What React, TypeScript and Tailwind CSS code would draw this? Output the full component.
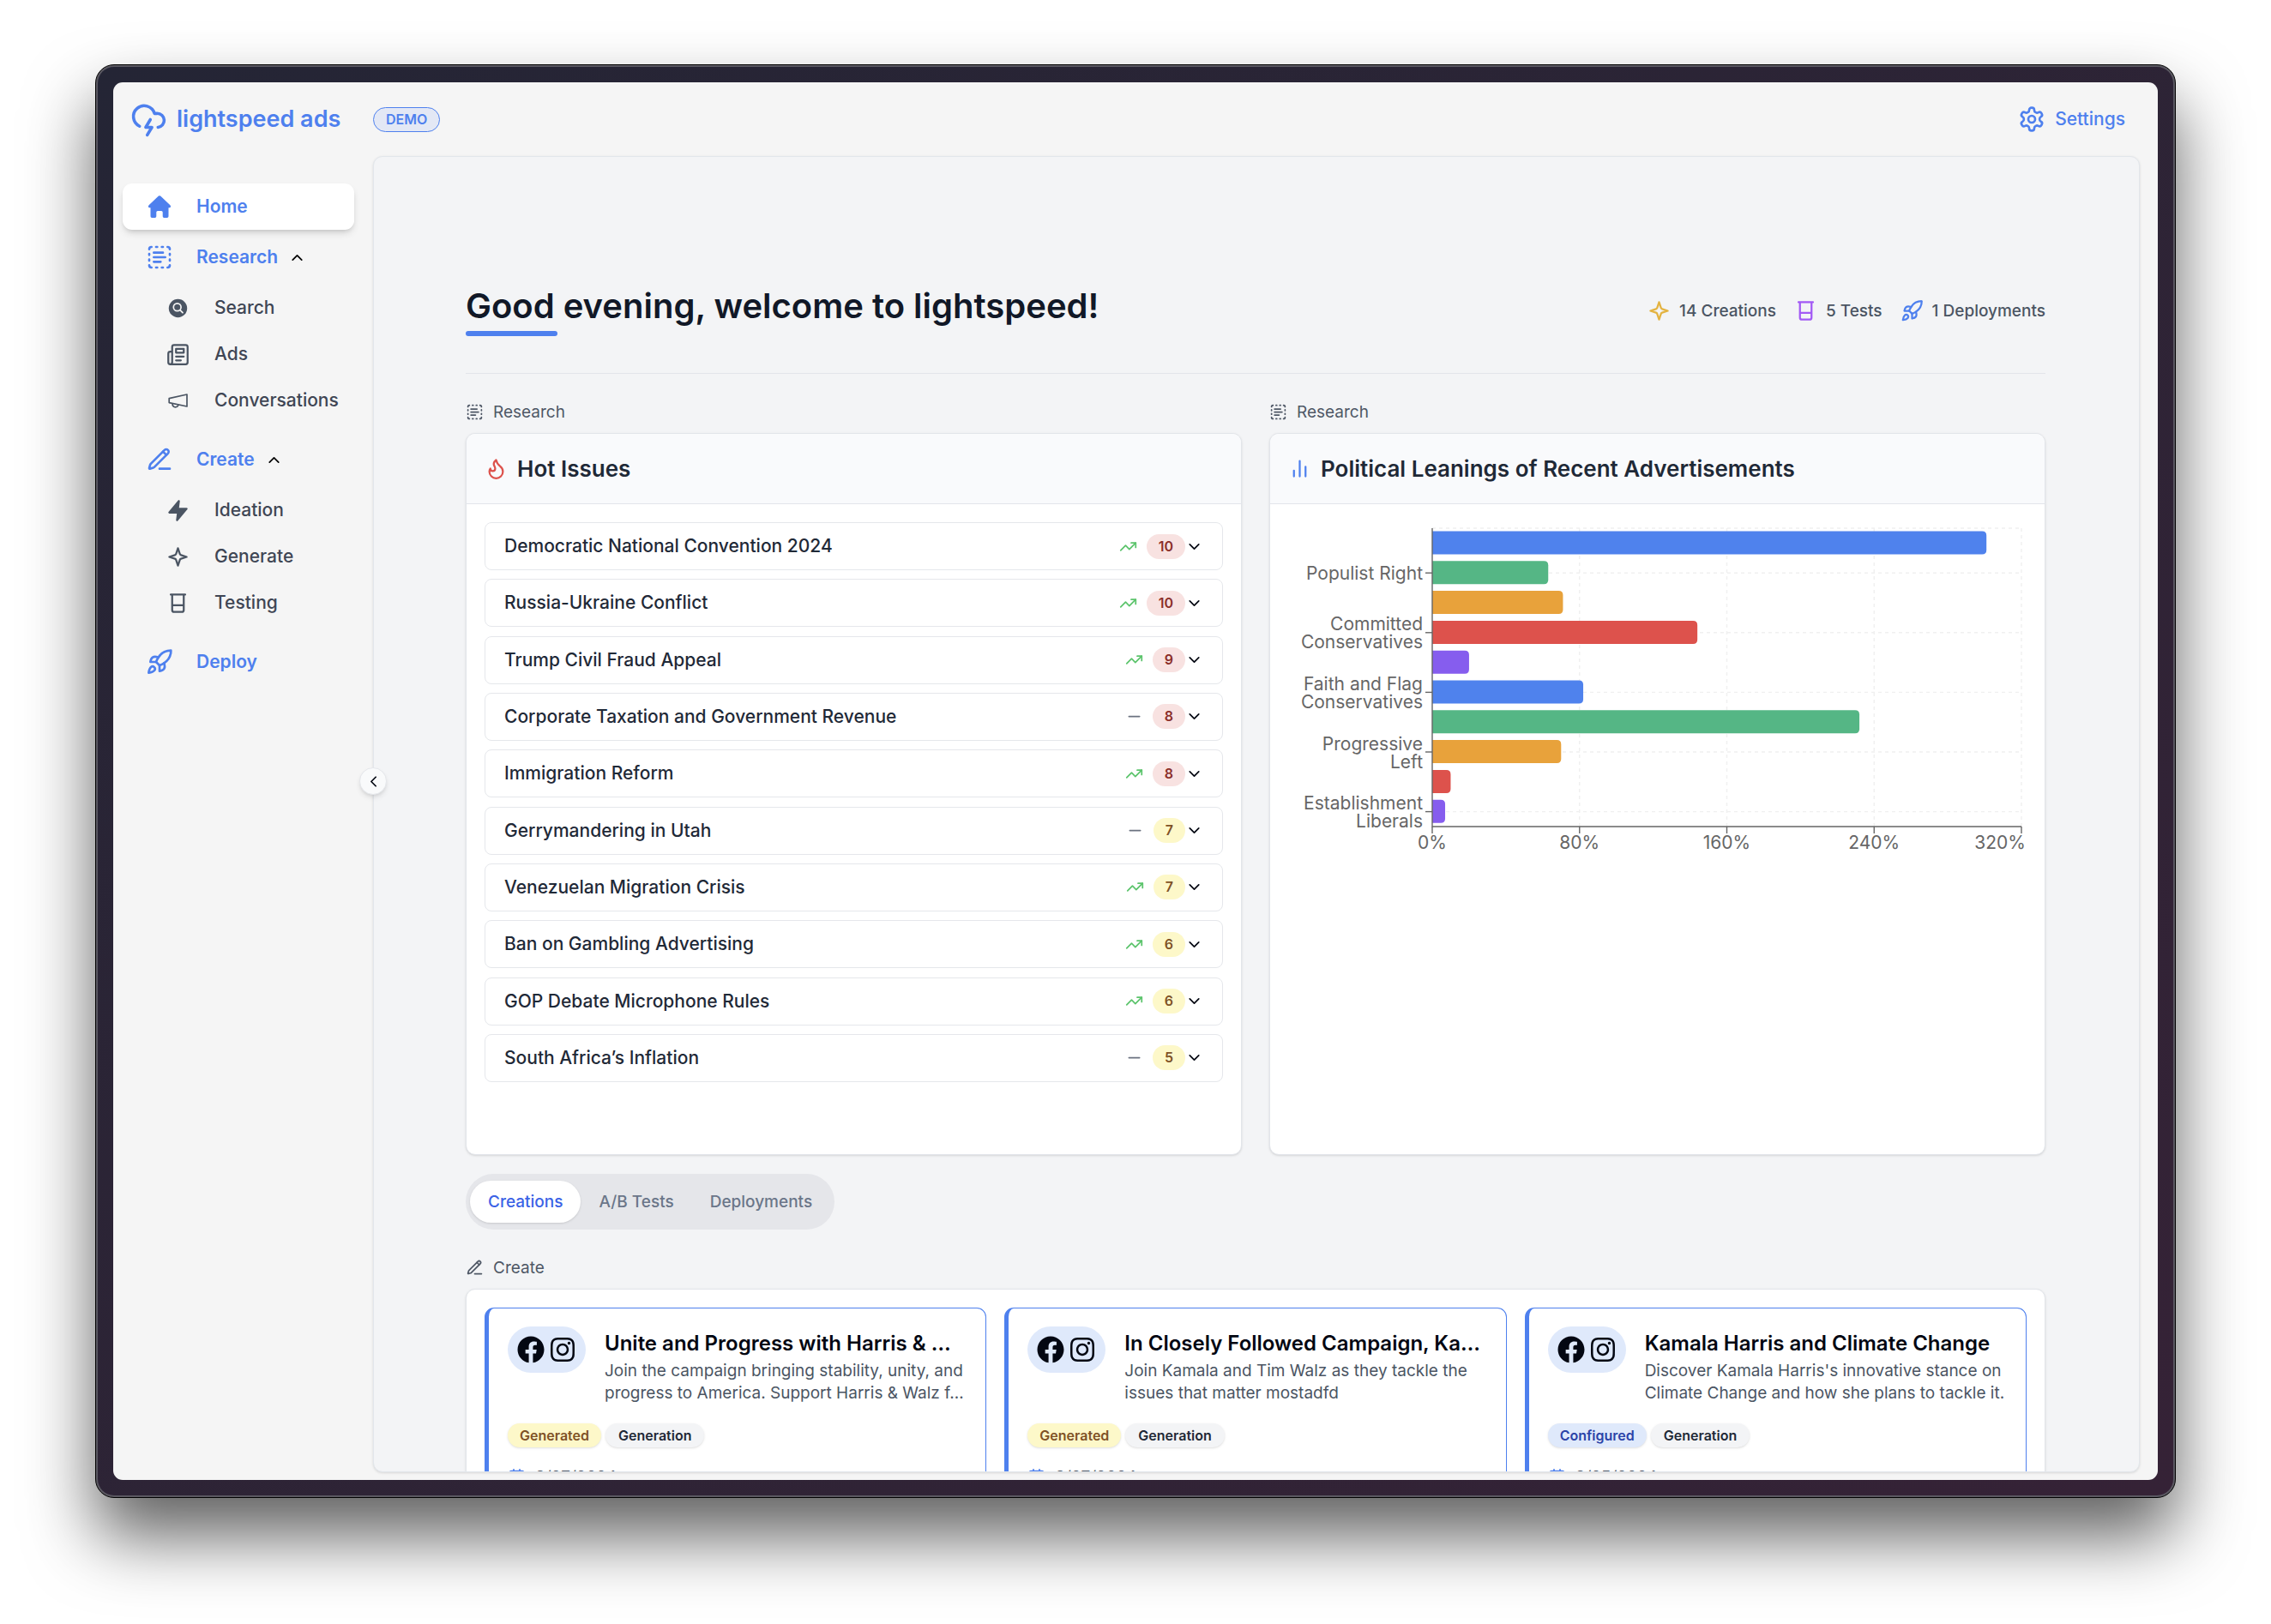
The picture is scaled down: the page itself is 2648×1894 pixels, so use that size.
import type { ReactNode } from "react";
import { FaFacebook, FaInstagram } from "react-icons/fa";

type IconProps = { className?: string; fill?: string };

function Stroke({ className = "size-[27px]", fill = "none", children }: IconProps & { children: ReactNode }) {
  return (
    <svg
      viewBox="0 0 24 24"
      className={`shrink-0 ${className}`}
      fill={fill}
      stroke="currentColor"
      strokeWidth={2}
      strokeLinecap="round"
      strokeLinejoin="round"
      aria-hidden="true"
    >
      {children}
    </svg>
  );
}

const CloudLightningIcon = (p: IconProps) => (
  <Stroke {...p}>
    <path d="M6 16.326A7 7 0 1 1 15.71 8h1.79a4.5 4.5 0 0 1 .5 8.973" />
    <path d="m13 12-3 5h4l-3 5" />
  </Stroke>
);

const TextSelectIcon = (p: IconProps) => (
  <Stroke {...p}>
    <path d="M5 3a2 2 0 0 0-2 2M19 3a2 2 0 0 1 2 2M21 19a2 2 0 0 1-2 2M5 21a2 2 0 0 1-2-2M9 3h1M9 21h1M14 3h1M14 21h1M3 9v1M21 9v1M3 14v1M21 14v1" />
    <path d="M7 8h8M7 12h10M7 16h6" />
  </Stroke>
);

const HomeIcon = () => (
  <svg viewBox="0 0 32 32" className="size-8 shrink-0" fill="currentColor" aria-hidden="true">
    <path d="M14.9 3.6a1.7 1.7 0 0 1 2.2 0L28.4 14.2c1.2 1.1.7 3-.8 3h-1.1v10a1.7 1.7 0 0 1-1.7 1.7h-3.4a1.7 1.7 0 0 1-1.7-1.7v-4.6a1.6 1.6 0 0 0-1.6-1.6h-4.2a1.6 1.6 0 0 0-1.6 1.6v4.6a1.7 1.7 0 0 1-1.7 1.7H7.2a1.7 1.7 0 0 1-1.7-1.7v-10H4.4c-1.5 0-2-1.9-.8-3z" />
  </svg>
);

const SearchCircleIcon = () => (
  <svg viewBox="0 0 27 27" className="size-[27px] shrink-0" aria-hidden="true">
    <circle cx="13.5" cy="13.5" r="10.7" fill="currentColor" />
    <circle cx="12.7" cy="12.3" r="4.4" fill="none" stroke="#f5f5f5" strokeWidth="1.7" />
    <path d="m16 15.7 3 3" stroke="#f5f5f5" strokeWidth="1.8" strokeLinecap="round" />
  </svg>
);

const NewspaperIcon = (p: IconProps) => (
  <Stroke {...p}>
    <path d="M4 22h16a2 2 0 0 0 2-2V4a2 2 0 0 0-2-2H8a2 2 0 0 0-2 2v16a2 2 0 0 1-2 2Zm0 0a2 2 0 0 1-2-2v-9c0-1.1.9-2 2-2h2" />
    <path d="M18 14h-8M15 18h-5M10 6h8v4h-8V6Z" />
  </Stroke>
);

const MegaphoneIcon = () => (
  <svg viewBox="0 0 27 27" className="size-[27px] shrink-0" fill="none" stroke="currentColor" strokeWidth={1.7} strokeLinejoin="round" aria-hidden="true">
    <path d="M3.2 10.7 24 6v14L3.200 15.600z" />
    <path d="M7 16.500c0 2.400 1.300 4.300 3.600 4.300 1.900 0 3-1 3.500-2.900" />
  </svg>
);

const PencilLineIcon = (p: IconProps) => (
  <Stroke {...p}>
    <path d="M12 20h9" />
    <path d="M16.376 3.622a1 1 0 0 1 3.002 3.002L7.368 18.635a2 2 0 0 1-.855.506l-2.872.838a.5.5 0 0 1-.62-.62l.838-2.872a2 2 0 0 1 .506-.854z" />
    <path d="m15 5 3 3" />
  </Stroke>
);

const ZapIcon = (p: IconProps) => (
  <Stroke {...p} fill="currentColor">
    <path d="M13 2 3 14h9l-1 8 10-12h-9l1-8z" />
  </Stroke>
);

const SparkleIcon = (p: IconProps) => (
  <Stroke {...p}>
    <path d="m12 3-1.912 5.813a2 2 0 0 1-1.275 1.275L3 12l5.813 1.912a2 2 0 0 1 1.275 1.275L12 21l1.912-5.813a2 2 0 0 1 1.275-1.275L21 12l-5.813-1.912a2 2 0 0 1-1.275-1.275L12 3Z" />
  </Stroke>
);

const BeakerIcon = (p: IconProps) => (
  <Stroke {...p}>
    <path d="M4.5 3h15M6 3v16a2 2 0 0 0 2 2h8a2 2 0 0 0 2-2V3M6 14h12" />
  </Stroke>
);

const RocketIcon = (p: IconProps) => (
  <Stroke {...p}>
    <path d="M4.5 16.5c-1.5 1.26-2 5-2 5s3.74-.5 5-2c.71-.84.7-2.13-.09-2.91a2.18 2.18 0 0 0-2.91-.09z" />
    <path d="m12 15-3-3a22 22 0 0 1 2-3.95A12.88 12.88 0 0 1 22 2c0 2.72-.78 7.5-6 11a22.35 22.35 0 0 1-4 2z" />
    <path d="M9 12H4s.55-3.03 2-4c1.62-1.08 5 0 5 0M12 15v5s3.03-.55 4-2c1.08-1.62 0-5 0-5" />
  </Stroke>
);

const SettingsIcon = (p: IconProps) => (
  <Stroke {...p}>
    <path d="M12.22 2h-.44a2 2 0 0 0-2 2v.18a2 2 0 0 1-1 1.73l-.43.25a2 2 0 0 1-2 0l-.15-.08a2 2 0 0 0-2.73.73l-.22.38a2 2 0 0 0 .73 2.73l.15.1a2 2 0 0 1 1 1.72v.51a2 2 0 0 1-1 1.74l-.15.09a2 2 0 0 0-.73 2.73l.22.38a2 2 0 0 0 2.73.73l.15-.08a2 2 0 0 1 2 0l.43.25a2 2 0 0 1 1 1.73V20a2 2 0 0 0 2 2h.44a2 2 0 0 0 2-2v-.18a2 2 0 0 1 1-1.73l.43-.25a2 2 0 0 1 2 0l.15.08a2 2 0 0 0 2.73-.73l.22-.39a2 2 0 0 0-.73-2.73l-.15-.08a2 2 0 0 1-1-1.74v-.5a2 2 0 0 1 1-1.74l.15-.09a2 2 0 0 0 .73-2.73l-.22-.38a2 2 0 0 0-2.73-.73l-.15.08a2 2 0 0 1-2 0l-.43-.25a2 2 0 0 1-1-1.73V4a2 2 0 0 0-2-2z" />
    <circle cx="12" cy="12" r="3" />
  </Stroke>
);

const FlameIcon = (p: IconProps) => (
  <Stroke {...p}>
    <path d="M8.5 14.5A2.5 2.5 0 0 0 11 12c0-1.38-.5-2-1-3-1.072-2.143-.224-4.054 2-6 .5 2.5 2 4.9 4 6.5 2 1.6 3 3.5 3 5.5a7 7 0 1 1-14 0c0-1.153.433-2.294 1-3a2.5 2.5 0 0 0 2.5 2.5z" />
  </Stroke>
);

const BarsIcon = (p: IconProps) => (
  <Stroke {...p}>
    <path d="M18 20V10M12 20V4M6 20v-6" />
  </Stroke>
);

const TrendingUpIcon = (p: IconProps) => (
  <Stroke {...p}>
    <path d="m22 7-8.5 8.5-5-5L2 17" />
    <path d="M16 7h6v6" />
  </Stroke>
);

const MinusIcon = (p: IconProps) => (
  <Stroke {...p}>
    <path d="M5 12h14" />
  </Stroke>
);

const CalendarIcon = (p: IconProps) => (
  <Stroke {...p}>
    <path d="M8 2v4M16 2v4M3 10h18" />
    <rect x="3" y="4" width="18" height="18" rx="2" />
  </Stroke>
);

const ChevronIcon = ({ className, d }: { className?: string; d: string }) => (
  <Stroke className={className}>
    <path d={d} />
  </Stroke>
);

const UP = "m18 15-6-6-6 6";
const DOWN = "m6 9 6 6 6-6";
const LEFT = "m15 18-6-6 6-6";

function SubLink({ icon, label }: { icon: ReactNode; label: string }) {
  return (
    <li>
      <a href="#" className="flex h-[54px] items-center gap-[29px] pl-[51px] text-[21px] leading-[32px] font-medium text-[#3f4654]">
        <span className="text-[#4b5563]">{icon}</span>
        {label}
      </a>
    </li>
  );
}

function GroupButton({ icon, label }: { icon: ReactNode; label: string }) {
  return (
    <button type="button" aria-expanded="true" className="flex h-[54px] w-full items-center pl-[27px] text-[21px] leading-[32px] font-semibold text-[#4e80ee]">
      {icon}
      <span className="ml-[27px]">{label}</span>
      <ChevronIcon d={UP} className="ml-3 size-[21px] text-black" />
    </button>
  );
}

function Sidebar() {
  return (
    <nav aria-label="Main" className="w-[303px] shrink-0 pt-8 pr-[22px] pl-[11px]">
      <a href="#" aria-current="page" className="flex h-[54px] items-center gap-[27px] rounded-[11px] bg-white pl-[27px] text-[21px] leading-[32px] font-semibold text-[#4e80ee] shadow-[0_5px_8px_-1px_rgba(0,0,0,0.12),0_3px_5px_-2px_rgba(0,0,0,0.12)]">
        <HomeIcon />
        Home
      </a>
      <div className="mt-[5px]">
        <GroupButton icon={<TextSelectIcon className="size-8" />} label="Research" />
        <ul className="mt-[5px]">
          <SubLink icon={<SearchCircleIcon />} label="Search" />
          <SubLink icon={<NewspaperIcon />} label="Ads" />
          <SubLink icon={<MegaphoneIcon />} label="Conversations" />
        </ul>
      </div>
      <div className="mt-[15px]">
        <GroupButton icon={<PencilLineIcon className="size-8" />} label="Create" />
        <ul className="mt-[5px]">
          <SubLink icon={<ZapIcon />} label="Ideation" />
          <SubLink icon={<SparkleIcon />} label="Generate" />
          <SubLink icon={<BeakerIcon />} label="Testing" />
        </ul>
      </div>
      <a href="#" className="mt-[15px] flex h-[54px] items-center gap-[27px] pl-[27px] text-[21px] leading-[32px] font-semibold text-[#4e80ee]">
        <RocketIcon className="size-8" />
        Deploy
      </a>
    </nav>
  );
}

function SectionLabel({ icon, children }: { icon: ReactNode; children: ReactNode }) {
  return (
    <div className="mb-[11px] flex items-center gap-[11px] text-[19px] leading-[27px] text-[#4f5866]">
      {icon}
      {children}
    </div>
  );
}

function Card({ icon, title, children }: { icon: ReactNode; title: string; children: ReactNode }) {
  return (
    <section className="flex-1 overflow-hidden rounded-[11px] border border-[#e2e5ea] bg-white shadow-sm">
      <header className="flex h-[82px] items-center gap-[11px] border-b border-[#e2e5ea] bg-[#f9fafc] px-[21px]">
        {icon}
        <h2 className="text-[26px] leading-[38px] font-semibold text-[#1f2937]">{title}</h2>
      </header>
      {children}
    </section>
  );
}

const issues = [
  { title: "Democratic National Convention 2024", score: 10, up: true },
  { title: "Russia-Ukraine Conflict", score: 10, up: true },
  { title: "Trump Civil Fraud Appeal", score: 9, up: true },
  { title: "Corporate Taxation and Government Revenue", score: 8, up: false },
  { title: "Immigration Reform", score: 8, up: true },
  { title: "Gerrymandering in Utah", score: 7, up: false },
  { title: "Venezuelan Migration Crisis", score: 7, up: true },
  { title: "Ban on Gambling Advertising", score: 6, up: true },
  { title: "GOP Debate Microphone Rules", score: 6, up: true },
  { title: "South Africa’s Inflation", score: 5, up: false },
];

function HotIssues() {
  return (
    <ul className="mx-[21px] mt-[21px] mb-[84px] flex h-[653px] flex-col justify-between">
      {issues.map((issue) => (
        <li key={issue.title}>
          <button type="button" aria-expanded="false" className="flex h-14 w-full items-center rounded-lg border border-[#e5e7eb] px-[22px] text-left">
            <span className="flex-1 text-[21px] leading-[32px] font-medium text-[#1f2937]">{issue.title}</span>
            {issue.up ? <TrendingUpIcon className="size-[21px] text-[#5cc46c]" /> : <MinusIcon className="size-[21px] text-[#6b7280]" />}
            <span
              className={`ml-[11px] rounded-full px-[14px] text-[16px] leading-[29px] font-semibold ${
                issue.score > 7 ? "bg-[#f8e2e1] text-[#8b2f2a]" : "bg-[#fdf8c9] text-[#7f5226]"
              }`}
            >
              {issue.score}
            </span>
            <ChevronIcon d={DOWN} className="size-[21px] text-[#030712]" />
          </button>
        </li>
      ))}
    </ul>
  );
}

const bars = [
  { value: 301, color: "#4f82ed" },
  { value: 63, color: "#55b685", label: ["Populist Right"] },
  { value: 71, color: "#e8a23b" },
  { value: 144, color: "#dd524c", label: ["Committed", "Conservatives"] },
  { value: 20, color: "#865dee" },
  { value: 82, color: "#4f82ed", label: ["Faith and Flag", "Conservatives"] },
  { value: 232, color: "#55b685" },
  { value: 70, color: "#e8a23b", label: ["Progressive", "Left"] },
  { value: 10, color: "#dd524c" },
  { value: 7, color: "#865dee", label: ["Establishment", "Liberals"] },
];

function LeaningsChart() {
  const x0 = 168;
  const width = 687;
  const top = 7;
  const band = 34.8;
  const bottom = top + band * bars.length;
  return (
    <svg
      viewBox="0 0 861 400"
      role="img"
      aria-label="Political leanings of recent advertisements"
      className="mx-[21px] mt-[21px] w-[calc(100%-42px)] text-[21px]"
      fill="#666666"
    >
      <g stroke="#f0f0f0" strokeWidth="1.4" strokeDasharray="4 4">
        <path d={`M${x0} ${top}h${width}`} />
        {bars.map((bar, i) => bar.label && <path key={i} d={`M${x0} ${top + band * (i + 0.5)}h${width}`} />)}
        {[1, 2, 3, 4].map((n) => (
          <path key={n} d={`M${x0 + (width * n) / 4} ${top}V${bottom}`} />
        ))}
      </g>
      {bars.map((bar, i) => {
        const w = (bar.value / 320) * width;
        return <path key={i} fill={bar.color} d={`M${x0} ${top + band * i + 3.5}h${w - 5}q5 0 5 5v17q0 5 -5 5h${5 - w}z`} />;
      })}
      <g stroke="#666666" strokeWidth="1.4" fill="none">
        <path d={`M${x0} ${top}V${bottom}H${x0 + width}`} />
        {[0, 1, 2, 3, 4].map((n) => (
          <path key={n} d={`M${x0 + (width * n) / 4} ${bottom}v8`} />
        ))}
        {bars.map((bar, i) => bar.label && <path key={i} d={`M${x0} ${top + band * (i + 0.5)}h-8`} />)}
      </g>
      {bars.map((bar, i) =>
        bar.label?.map((line, n, all) => (
          <text key={line + i} x={x0 - 11} y={top + band * (i + 0.5) + 8 + (n - (all.length - 1) / 2) * 21} textAnchor="end">
            {line}
          </text>
        )),
      )}
      {[0, 1, 2, 3].map((n) => (
        <text key={n} x={x0 + (width * n) / 4} y={bottom + 26} textAnchor="middle">
          {n * 80}%
        </text>
      ))}
      <text x="860" y={bottom + 26} textAnchor="end">
        320%
      </text>
    </svg>
  );
}

const creations = [
  {
    title: "Unite and Progress with Harris & …",
    text: "Join the campaign bringing stability, unity, and progress to America. Support Harris & Walz f…",
    status: "Generated",
    date: "8/27/2024",
  },
  {
    title: "In Closely Followed Campaign, Ka…",
    text: "Join Kamala and Tim Walz as they tackle the issues that matter mostadfd",
    status: "Generated",
    date: "8/27/2024",
  },
  {
    title: "Kamala Harris and Climate Change",
    text: "Discover Kamala Harris's innovative stance on Climate Change and how she plans to tackle it.",
    status: "Configured",
    date: "8/25/2024",
  },
];

function CreationCard({ title, text, status, date }: (typeof creations)[number]) {
  return (
    <article className="rounded-[11px] border border-l-[5px] border-[#4e80ee] bg-white p-[21px] pl-[22px]">
      <div className="flex items-start gap-[22px]">
        <div className="flex shrink-0 gap-[5px] rounded-full bg-[#dfe9fb] p-[11px] text-[#030712]">
          <FaFacebook className="size-8" aria-label="Facebook" />
          <FaInstagram className="size-8" aria-label="Instagram" />
        </div>
        <div className="min-w-0 flex-1">
          <h3 className="truncate text-[24px] leading-[39px] font-semibold text-[#030712]">{title}</h3>
          <p className="line-clamp-2 text-[19px] leading-[26px] text-[#4b5563]">{text}</p>
        </div>
      </div>
      <div className="mt-[22px] flex gap-[5px] text-[16px] leading-[28px] font-semibold">
        <span className={`rounded-full px-[14px] shadow-sm ${status === "Generated" ? "bg-[#fdf8c9] text-[#7f5226]" : "bg-[#dfe9fb] text-[#2b43a8]"}`}>{status}</span>
        <span className="rounded-full bg-[#f3f4f6] px-[15px] text-[#1f2937] shadow-sm">Generation</span>
      </div>
      <div className="mt-[21px] flex items-center gap-[11px] text-[19px] leading-[27px] text-[#4b5563]">
        <CalendarIcon className="size-[21px] text-[#4e80ee]" />
        {date}
      </div>
    </article>
  );
}

function Dashboard() {
  return (
    <main className="mr-[21px] mb-[9px] min-w-0 flex-1 overflow-hidden rounded-[11px] border border-[#e2e6eb] bg-[#f3f4f6] pt-[150px] pr-[109px] pl-[107px] shadow-[0_1px_3px_rgba(0,0,0,0.12)]">
      <div className="flex items-center justify-between border-b border-[#e2e5ea] pb-[43px]">
        <div>
          <h1 className="text-[40px] leading-[48px] font-semibold text-[#111827]">Good evening, welcome to lightspeed!</h1>
          <div className="mt-[5px] h-[6px] w-[107px] rounded-full bg-[#4e80ee]" />
        </div>
        <ul className="flex gap-[21px] text-[19px] leading-[27px] font-medium text-[#4b5563]">
          <li className="flex items-center gap-[10px]"><SparkleIcon className="size-[27px] text-[#e3b341]" />14 Creations</li>
          <li className="flex items-center gap-[10px]"><BeakerIcon className="size-[27px] text-[#a259f5]" />5 Tests</li>
          <li className="flex items-center gap-[10px]"><RocketIcon className="size-[27px] text-[#4e80ee]" />1 Deployments</li>
        </ul>
      </div>

      <div className="mt-[31px] grid grid-cols-2 gap-8">
        <div className="flex flex-col">
          <SectionLabel icon={<TextSelectIcon className="size-[21px]" />}>Research</SectionLabel>
          <Card title="Hot Issues" icon={<FlameIcon className="size-[27px] text-[#dd524c]" />}>
            <HotIssues />
          </Card>
        </div>
        <div className="flex flex-col">
          <SectionLabel icon={<TextSelectIcon className="size-[21px]" />}>Research</SectionLabel>
          <Card title="Political Leanings of Recent Advertisements" icon={<BarsIcon className="size-[27px] text-[#4e80ee]" />}>
            <LeaningsChart />
          </Card>
        </div>
      </div>

      <div role="tablist" className="mt-[22px] inline-flex rounded-full bg-[#e5e6ea] px-[5px] py-2 align-top text-[19px] leading-[27px] font-medium text-[#6b7689]">
        <button type="button" role="tab" aria-selected="true" className="rounded-full bg-white px-[21px] py-[11px] text-[#3b63e6] shadow-sm">Creations</button>
        <button type="button" role="tab" aria-selected="false" className="rounded-full px-[21px] py-[11px]">A/B Tests</button>
        <button type="button" role="tab" aria-selected="false" className="rounded-full px-[21px] py-[11px]">Deployments</button>
      </div>

      <div className="mt-[31px]">
        <SectionLabel icon={<PencilLineIcon className="size-[21px]" />}>Create</SectionLabel>
        <div className="grid grid-cols-3 gap-[21px] rounded-[11px] border border-[#e2e5ea] bg-white p-[21px] shadow-sm">
          {creations.map((creation) => (
            <CreationCard key={creation.title} {...creation} />
          ))}
        </div>
      </div>
    </main>
  );
}

export default function App() {
  return (
    <div className="flex h-screen flex-col bg-white px-[111px] pt-[75px] pb-[147px] font-['Inter',sans-serif]">
      <div className="flex min-h-0 flex-1 rounded-[22px] border border-black bg-[#5a5861] p-[2px] shadow-[0_45px_80px_rgba(0,0,0,0.62)]">
        <div className="flex min-w-0 flex-1 rounded-[19px] bg-linear-to-br from-[#242535] to-[#352236] p-[18px]">
          <div className="relative flex min-w-0 flex-1 flex-col overflow-hidden rounded-[11px] bg-[#f5f5f5]">
            <header className="flex h-[86px] shrink-0 items-center pr-[38px] text-[#4e80ee]">
              <a href="#" className="flex w-[303px] items-center gap-[11px] pl-5 text-[27px] leading-[38px] font-semibold">
                <CloudLightningIcon className="size-[43px]" />
                lightspeed ads
              </a>
              <span className="rounded-full border border-[#4e80ee] bg-[#e3e8f5] px-[14px] text-[16px] leading-[27px] font-semibold">DEMO</span>
              <a href="#" className="ml-auto flex items-center gap-[11px] text-[21px] leading-[32px] font-medium">
                <SettingsIcon className="size-8" />
                Settings
              </a>
            </header>
            <div className="flex min-h-0 flex-1">
              <Sidebar />
              <Dashboard />
            </div>
            <button
              type="button"
              aria-label="Collapse sidebar"
              className="absolute top-1/2 left-[287px] flex size-8 -translate-y-1/2 items-center justify-center rounded-full border border-[#e5e7eb] bg-[#f9fafb] text-[#030712] shadow-md"
            >
              <ChevronIcon d={LEFT} className="size-[21px]" />
            </button>
          </div>
        </div>
      </div>
    </div>
  );
}
